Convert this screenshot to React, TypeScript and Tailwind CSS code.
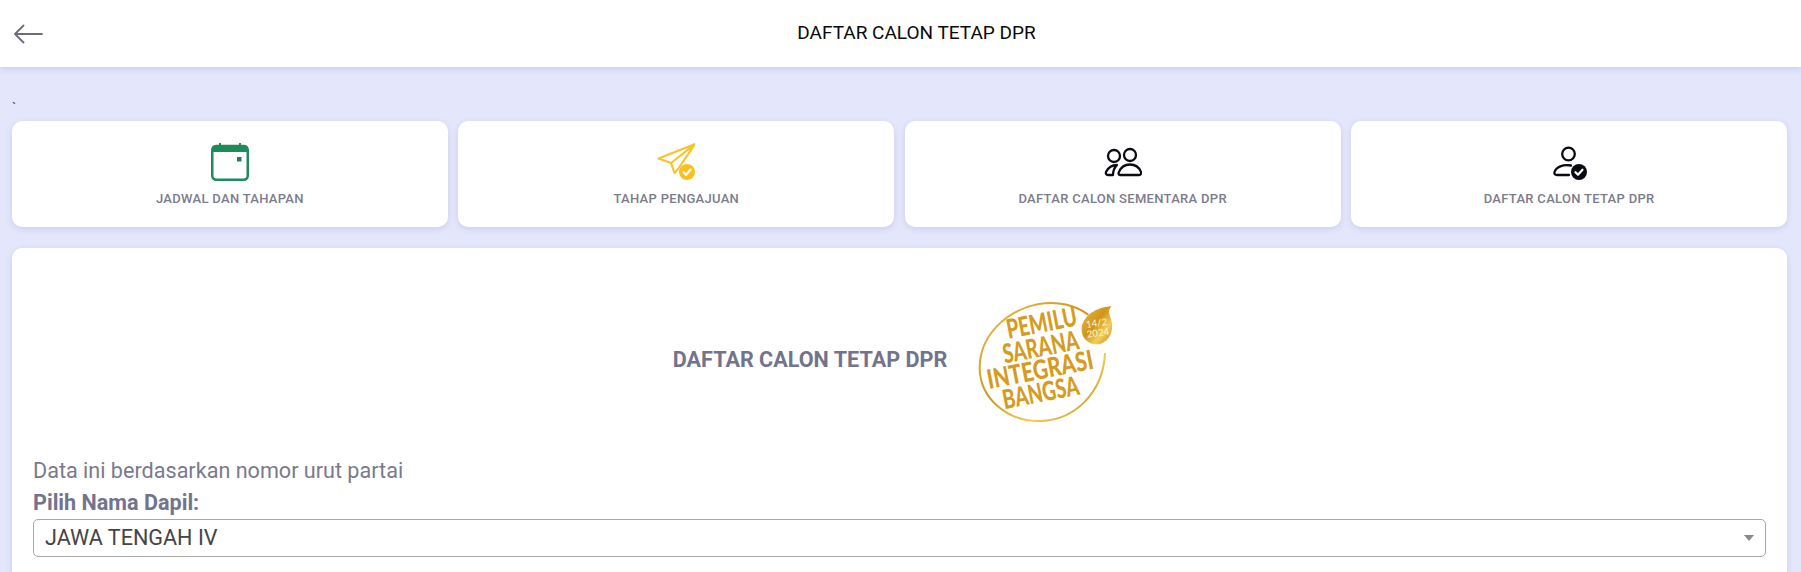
import React from 'react';

const CalendarIcon = () => (
    <svg width="38" height="38" viewBox="0 0 38 38" fill="none">
        <rect x="1.25" y="3" width="35.5" height="33.75" rx="4" stroke="#1f8a5a" strokeWidth="2.5" />
        <path d="M1 9V6a4 4 0 0 1 4-4h3V0h2v2h18V0h2v2h3a4 4 0 0 1 4 4v3z" fill="#1f8a5a" />
        <rect x="26" y="14" width="4.5" height="4.5" fill="#2c7a5c" />
    </svg>
);

const PlaneIcon = () => (
    <svg width="38" height="38" viewBox="0 0 38 38" fill="none">
        <path d="M38 1L1.5 15.5L14 20L38 1L21 26M14 20L17.5 30L21 26" stroke="#f7c52b" strokeWidth="2.2" strokeLinecap="round" strokeLinejoin="round" />
        <circle cx="30" cy="29" r="8" fill="#f7c21e" />
        <path d="M26.5 29.2l2.5 2.5 4.5-5" stroke="#fff" strokeWidth="2.2" strokeLinecap="round" strokeLinejoin="round" />
    </svg>
);

const PeopleIcon = () => (
    <svg width="38" height="38" viewBox="0 0 38 38" fill="none" stroke="#0b0b14" strokeWidth="2.3">
        <circle cx="10" cy="13" r="6" />
        <circle cx="26" cy="12" r="6" />
        <path d="M16 32C14 32 14.5 30 15 29C17 24 21 21.5 26 21.5C31 21.5 35 24 37 29C37.5 30.5 37 32 35 32Z" strokeLinejoin="round" />
        <path d="M13 22C8 22 4 25 2 29C1.5 30.5 2 32 4 32L9 32C9 28 10 25 13 22Z" strokeLinejoin="round" />
    </svg>
);

const PersonCheckIcon = () => (
    <svg width="38" height="38" viewBox="0 0 38 38" fill="none">
        <circle cx="18.5" cy="11" r="6.3" stroke="#0b0b14" strokeWidth="2.3" />
        <path d="M21 22.5C13 21 6 24 4.5 29C4 31 5 32 7 32L19 32" stroke="#0b0b14" strokeWidth="2.3" strokeLinecap="round" />
        <circle cx="29" cy="29" r="8" fill="#0b0b14" />
        <path d="M25.5 29.2l2.5 2.5 4.5-5" stroke="#fff" strokeWidth="2.2" strokeLinecap="round" strokeLinejoin="round" />
    </svg>
);

// Gold election badge, coordinates follow a 3x crop of the logo
const PemiluLogo = () => (
    <svg width="150" height="130" viewBox="45 20 450 390" fill="none">
        <defs>
            <linearGradient id="gold" x1="0" y1="0" x2="1" y2="1">
                <stop offset="0" stopColor="#eac14a" />
                <stop offset="0.45" stopColor="#d0941a" />
                <stop offset="0.7" stopColor="#f0cf5c" />
                <stop offset="1" stopColor="#c08a15" />
            </linearGradient>
        </defs>
        <path
            d="M380 72C345 45 290 30 230 42C130 62 55 140 56 235C58 325 140 395 240 392C340 388 425 310 432 190"
            stroke="url(#gold)"
            strokeWidth="6"
            strokeLinecap="round"
        />
        <path d="M362 115C364 78 405 50 452 48C440 60 444 70 450 85C462 122 442 160 408 162C381 163 360 140 362 115Z" fill="url(#gold)" />
        <g fill="#fff6d0" fontFamily="Lato, sans-serif" fontSize="29" textAnchor="middle" transform="rotate(-8 410 115)">
            <text x="409" y="108">14/2</text>
            <text x="409" y="138">2024</text>
        </g>
        <g fill="#d59c22" fontFamily="Lato, sans-serif" fontWeight="900" fontSize="80" textAnchor="middle" transform="rotate(-11 245 215)">
            <text transform="translate(264 127) scale(0.72 1)">PEMILU</text>
            <text transform="translate(248 198) scale(0.71 1)">SARANA</text>
            <text transform="translate(233 264) scale(0.78 1)">INTEGRASI</text>
            <text transform="translate(222 332) scale(0.71 1)">BANGSA</text>
        </g>
    </svg>
);

const menus = [
    { label: 'JADWAL DAN TAHAPAN', icon: <CalendarIcon /> },
    { label: 'TAHAP PENGAJUAN', icon: <PlaneIcon /> },
    { label: 'DAFTAR CALON SEMENTARA DPR', icon: <PeopleIcon /> },
    { label: 'DAFTAR CALON TETAP DPR', icon: <PersonCheckIcon /> },
];

export default function App() {
    return (
        <div className="h-[572px] overflow-hidden bg-[#e4e6fc] font-['Roboto',sans-serif]">
            <header className="relative flex h-[67px] items-center justify-center bg-white shadow-[0_2px_6px_rgba(90,90,160,0.18)]">
                <svg className="absolute left-[14px] top-[24px]" width="29" height="20" viewBox="0 0 29 20" fill="none" stroke="#6e6b7f" strokeWidth="1.8" strokeLinecap="round" strokeLinejoin="round">
                    <path d="M28 10H1M9.5 1.5L1 10l8.5 8.5" />
                </svg>
                <h1 className="pl-[32px] text-[19px] font-normal text-[#0a0a0a]">DAFTAR CALON TETAP DPR</h1>
            </header>

            <div className="pl-3 pr-[14px]">
                <p className="h-[54px] pt-[31px] text-[14px] leading-[20px] text-[#444]">`</p>

                <div className="grid grid-cols-4 gap-[10.6px]">
                    {menus.map((menu) => (
                        <div key={menu.label} className="flex h-[106px] flex-col items-center rounded-[10px] bg-white pt-[22px] shadow-[0_2px_6px_rgba(90,90,160,0.16)]">
                            {menu.icon}
                            <span className="mt-[10px] text-[13px] font-medium leading-[16px] tracking-[0.3px] text-[#7c7c8c]">{menu.label}</span>
                        </div>
                    ))}
                </div>

                <div className="mt-[21px] h-[400px] rounded-[10px] bg-white px-[21px] pt-[49px] shadow-[0_2px_6px_rgba(90,90,160,0.16)]">
                    <div className="flex items-center justify-center gap-[29px]">
                        <h2 className="mb-[4px] text-[21.6px] font-bold text-[#72748d]">DAFTAR CALON TETAP DPR</h2>
                        <PemiluLogo />
                    </div>
                    <p className="mt-[30px] text-[21.6px] leading-[28px] text-[#7a7a8c]">Data ini berdasarkan nomor urut partai</p>
                    <p className="mt-[4px] text-[21.6px] font-bold leading-[28px] text-[#72748d]">Pilih Nama Dapil:</p>
                    <div className="relative mt-[2px] flex h-[38px] items-center rounded-[5px] border border-[#a8a8a8] pl-[11px] text-[21.6px] text-[#444]">
                        JAWA TENGAH IV
                        <span className="absolute right-[11px] top-[15px] border-x-[5px] border-t-[6px] border-x-transparent border-t-[#888]" />
                    </div>
                </div>
            </div>
        </div>
    );
}
